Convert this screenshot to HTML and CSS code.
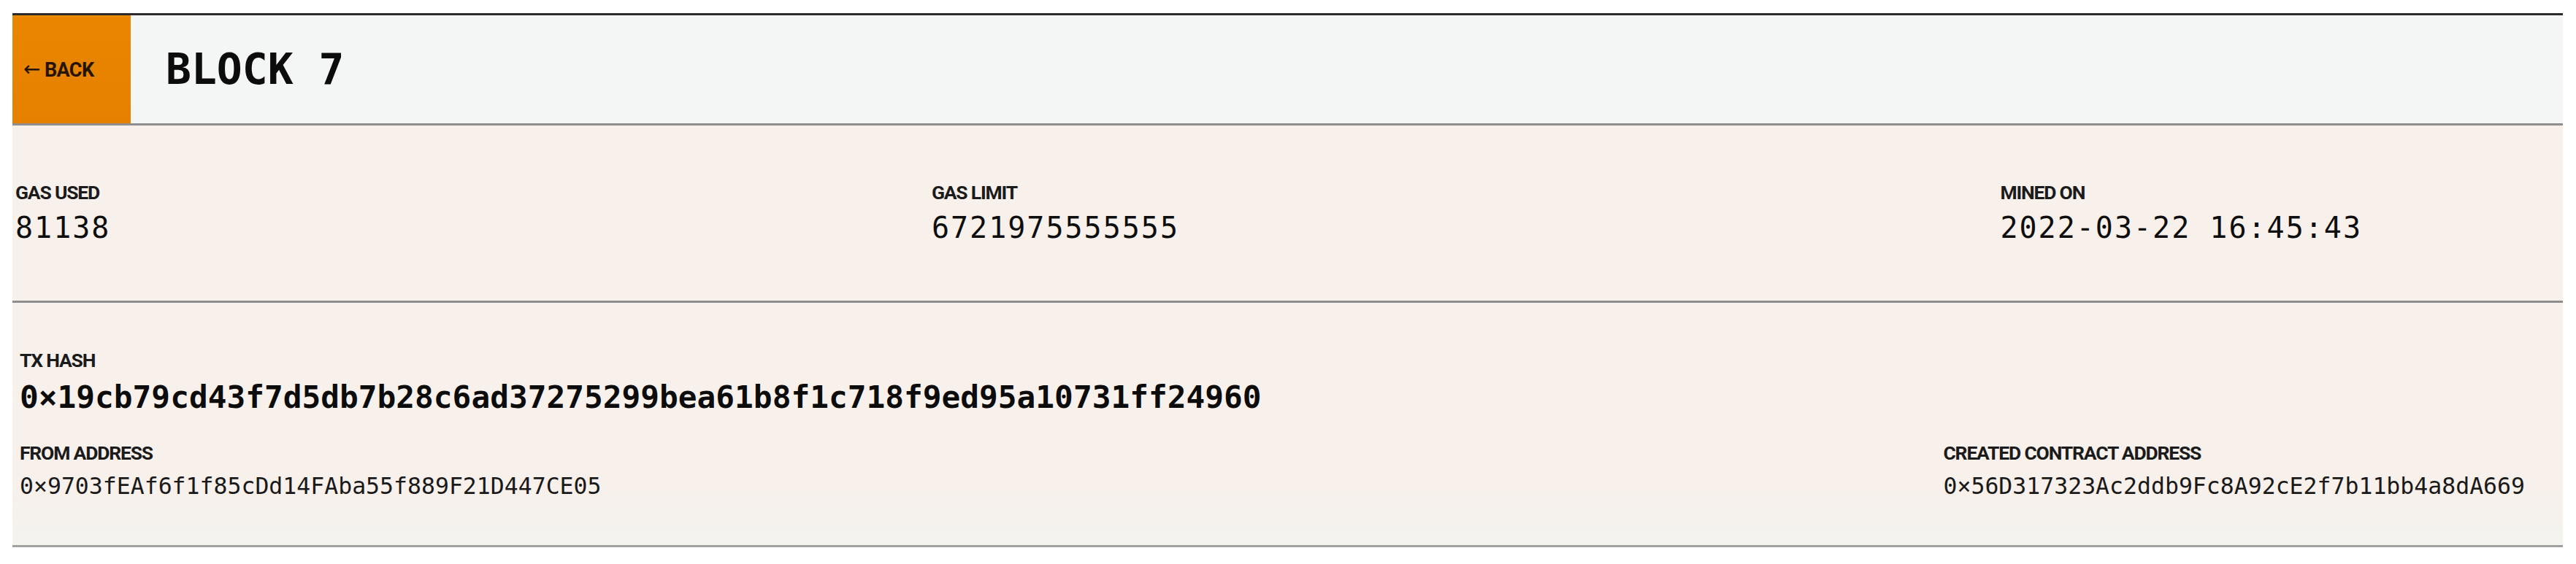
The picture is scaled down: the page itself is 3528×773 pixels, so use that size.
FILE: index.html
```html
<!DOCTYPE html>
<html lang="en">
<head>
<meta charset="utf-8">
<title>Block 7</title>
<link rel="stylesheet" href="styles.css">
</head>
<body>
<div class="page">
  <header class="topbar">
    <a class="back" href="#"><span class="arrow">&larr;</span>BACK</a>
    <h1 class="title">BLOCK 7</h1>
  </header>
  <section class="stats">
    <div class="field">
      <div class="label">GAS USED</div>
      <div class="value">81138</div>
    </div>
    <div class="field">
      <div class="label">GAS LIMIT</div>
      <div class="value">6721975555555</div>
    </div>
    <div class="field">
      <div class="label">MINED ON</div>
      <div class="value">2022-03-22 16:45:43</div>
    </div>
  </section>
  <section class="tx">
    <div class="field">
      <div class="label">TX HASH</div>
      <div class="hash">0×19cb79cd43f7d5db7b28c6ad37275299bea61b8f1c718f9ed95a10731ff24960</div>
    </div>
    <div class="addr-row">
      <div class="field">
        <div class="label">FROM ADDRESS</div>
        <div class="addr">0×9703fEAf6f1f85cDd14FAba55f889F21D447CE05</div>
      </div>
      <div class="field">
        <div class="label">CREATED CONTRACT ADDRESS</div>
        <div class="addr">0×56D317323Ac2ddb9Fc8A92cE2f7b11bb4a8dA669</div>
      </div>
    </div>
  </section>
</div>
</body>
</html>
```
FILE: styles.css
```css
html, body {
  margin: 0;
  padding: 0;
  background: #ffffff;
}

.page {
  padding: 18px 18px 0 17px;
}

.topbar {
  display: flex;
  align-items: stretch;
  height: 148px;
  background: #f4f6f5;
  border-top: 3px solid #2a2a2a;
  border-bottom: 3px solid #8e8e8e;
}

.back {
  display: flex;
  align-items: center;
  gap: 6px;
  box-sizing: border-box;
  width: 162px;
  padding-left: 15px;
  padding-top: 2px;
  background: linear-gradient(to bottom, #ea8600, #e68000);
  color: #241400;
  text-decoration: none;
  font-family: Roboto, "Liberation Sans", sans-serif;
  font-weight: 700;
  font-size: 27px;
  letter-spacing: -0.6px;
}

.arrow {
  font-family: "DejaVu Sans", sans-serif;
  font-weight: 400;
  font-size: 28px;
  line-height: 1;
  margin-top: -3px;
}

.title {
  margin: 0;
  display: flex;
  align-items: center;
  padding-left: 48px;
  font-family: "DejaVu Sans Mono", monospace;
  font-weight: 700;
  font-size: 58px;
  color: #0c0c0c;
}

.stats {
  display: flex;
  justify-content: space-between;
  background: #f7f0eb;
  padding: 77px 275px 76px 4px;
  border-bottom: 3px solid #8e8e8e;
}

.field {
  display: flex;
  flex-direction: column;
}

.label {
  font-family: Roboto, "Liberation Sans", sans-serif;
  font-weight: 700;
  font-size: 26.5px;
  line-height: 30px;
  letter-spacing: -1.2px;
  color: #1b1b1b;
}

.value {
  margin-top: 9px;
  font-family: "DejaVu Sans Mono", monospace;
  font-size: 40px;
  line-height: 48px;
  letter-spacing: 2px;
  color: #0e0e0e;
}

.tx {
  background: linear-gradient(to bottom, #f7f0eb 0%, #f7f0eb 78%, #f3f3ef 100%);
  padding: 64px 52px 62px 10px;
  border-bottom: 3px solid #a0a0a0;
}

.hash {
  margin-top: 10px;
  font-family: "DejaVu Sans Mono", monospace;
  font-weight: 700;
  font-size: 42.8px;
  line-height: 50px;
  color: #0c0c0c;
}

.addr-row {
  display: flex;
  justify-content: space-between;
  margin-top: 37px;
}

.addr {
  margin-top: 11px;
  font-family: "DejaVu Sans Mono", monospace;
  font-size: 31.5px;
  line-height: 38px;
  color: #1a1a1a;
}
```
